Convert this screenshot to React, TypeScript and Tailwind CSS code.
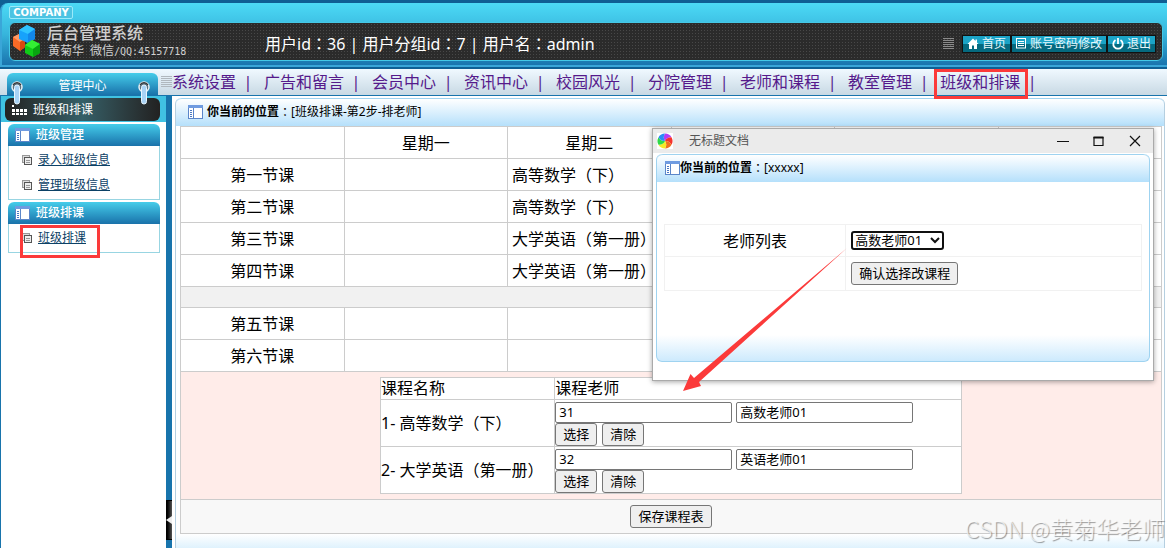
import { ReactNode } from 'react';

const FONT = "font-['Noto_Sans','Noto_Sans_CJK_SC',sans-serif]";

const NAV = ['系统设置', '广告和留言', '会员中心', '资讯中心', '校园风光', '分院管理', '老师和课程', '教室管理', '班级和排课'];

const MENUS = [
  { title: '班级管理', links: ['录入班级信息', '管理班级信息'] },
  { title: '班级排课', links: ['班级排课'] },
];

const MORNING = [
  { name: '第一节课', tuesday: '高等数学（下）' },
  { name: '第二节课', tuesday: '高等数学（下）' },
  { name: '第三节课', tuesday: '大学英语（第一册）' },
  { name: '第四节课', tuesday: '大学英语（第一册）' },
];

const AFTERNOON = [
  { name: '第五节课', tuesday: '' },
  { name: '第六节课', tuesday: '' },
];

const COURSES = [
  { id: 1, name: '高等数学（下）', teacherId: '31', teacher: '高数老师01' },
  { id: 2, name: '大学英语（第一册）', teacherId: '32', teacher: '英语老师01' },
];

const CELL = 'border border-[#ccc]';

function Stripes({ color }: { color: string }) {
  return (
    <svg width="11" height="12" viewBox="0 0 11 12" className="shrink-0" fill={color}>
      {[0, 2, 4, 6, 8, 10].map((y) => (
        <rect key={y} x="0" y={y} width="11" height="1" />
      ))}
    </svg>
  );
}

// the TC face centres the full-width colon in its box
function Colon() {
  return <span className="font-['Noto_Sans_CJK_TC',sans-serif]">：</span>;
}

function PanelIcon() {
  return (
    <svg width="15" height="14" viewBox="0 0 15 14" className="shrink-0">
      <rect x="0.5" y="1" width="14" height="12.5" fill="#fff" stroke="#5b86c9" />
      <rect x="0" y="0" width="15" height="3" fill="#6f9be0" />
      <path d="M5.5 3v10" stroke="#5b86c9" />
      <path d="M2 5.5h2M2 7.5h2M2 9.5h2M2 11.5h2" stroke="#4a78c2" />
    </svg>
  );
}

function PageIcon() {
  return (
    <svg width="10" height="10" viewBox="0 0 10 10" className="shrink-0" fill="none">
      <rect x="0.5" y="0.5" width="7" height="7" fill="#ddd" stroke="#999" />
      <rect x="2.5" y="2.5" width="7" height="7" fill="#eee" stroke="#555" />
      <path d="M4 5.5h4M4 7.5h4" stroke="#999" />
    </svg>
  );
}

function CubesLogo() {
  return (
    <svg width="27" height="33" viewBox="0 0 27 33" className="shrink-0">
      <path d="M0 12l6-3 6 5v8l-5 4-7-5z" fill="#fb6a26" />
      <path d="M0 12l6-3 6 5-5 3z" fill="#ff9a66" />
      <path d="M7 17l5-3v8l-5 4z" fill="#d9480f" />
      <path d="M6 5l8-5 8 4v10l-7 4-9-4z" fill="#17a2fb" />
      <path d="M6 5l8-5 8 4-7 5z" fill="#2fc4ff" />
      <path d="M15 9l7-5v10l-7 4z" fill="#1287ea" />
      <path d="M12 20l7-5 8 4v9l-7 4-8-4z" fill="#10cc18" />
      <path d="M12 20l7-5 8 4-7 5z" fill="#34ee34" />
      <path d="M20 24l7-5v9l-7 4z" fill="#08a510" />
    </svg>
  );
}

function Clip() {
  return (
    <svg width="12" height="24" viewBox="0 0 12 24">
      <circle cx="6" cy="6" r="5" fill="#5b6f7c" stroke="#e6eef3" strokeWidth="1.5" />
      <path d="M2 4a4.5 4.5 0 0 1 8 0" stroke="#333" strokeWidth="1.2" fill="none" />
      <rect x="3.5" y="4" width="5" height="19" rx="2.5" fill="#a9d3f5" stroke="#e8f6ff" />
    </svg>
  );
}

function HomeIcon() {
  return (
    <svg width="12" height="12" viewBox="0 0 12 12" fill="#fff">
      <path d="M6 0.5L0.5 6H2v5h3V7.5h2V11h3V6h1.5L10 4.4V1.5H8.5v1.4z" />
    </svg>
  );
}

function ListIcon() {
  return (
    <svg width="11" height="11" viewBox="0 0 11 11" fill="none" stroke="#fff">
      <rect x="0.5" y="0.5" width="9" height="9.5" />
      <path d="M2 3.5h6M2 5.5h6M2 7.5h6" />
    </svg>
  );
}

function PowerIcon() {
  return (
    <svg width="12" height="12" viewBox="0 0 12 12" fill="none" stroke="#fff" strokeWidth="1.8">
      <path d="M3.5 2a4.7 4.7 0 1 0 5 0M6 0v6" />
    </svg>
  );
}

function PinwheelIcon() {
  const colors = ['#b43cf5', '#f5322d', '#f0701e', '#f5ea28', '#2fd84a', '#2b8cf5'];
  return (
    <svg width="16" height="16" viewBox="0 0 16 16" className="bg-white">
      {colors.map((c, i) => (
        <path key={c} d="M8 8Q5.5 4.5 8 .5A7.5 7.5 0 0 1 14.5 4.25Q9.8 4.1 8 8z" fill={c} transform={`rotate(${i * 60} 8 8)`} />
      ))}
    </svg>
  );
}

function HeaderLink({ icon, children }: { icon: ReactNode; children: ReactNode }) {
  return (
    <a
      href="#"
      className="flex h-[18px] items-center gap-[3px] border border-[#111] bg-linear-to-b from-[#1ba3c6] from-50% to-[#056a80] to-50% px-1 text-xs text-[#e8f8fc]"
    >
      {icon}
      {children}
    </a>
  );
}

function FormButton({ children }: { children: ReactNode }) {
  return (
    <button type="button" className="h-[23px] rounded-[3px] border border-[#767676] bg-[#efefef] px-[7px] text-[13px] leading-[19px] text-black">
      {children}
    </button>
  );
}

function LocationBar({ children }: { children: ReactNode }) {
  return (
    <div className="flex h-7 items-center rounded-t-md border-t border-[#9fd3f0] bg-linear-to-b from-white to-[#b5e0fb] pb-px text-xs leading-4 text-black">
      {children}
    </div>
  );
}

function Header() {
  return (
    <header className="border-t-3 border-[#0f5f94] bg-[#0f5f94]">
      <div className="rounded-tl-lg border-b-2 border-l-2 border-[#3aa6d8] bg-linear-to-b from-[#4cdaf6] via-[#37b5dc] to-[#1a74ae] pt-[3px] pr-1 pb-1 pl-[7px]">
        <div className="flex">
          <span className="flex h-[13px] w-16 items-center justify-center rounded-xs border border-[#9aeafa] bg-[#4cc3e2] font-['DejaVu_Sans',sans-serif] text-[10px] font-bold text-white">
            COMPANY
          </span>
        </div>
        <div className="mt-[3px] flex h-[39px] items-center rounded-md border border-[#45c8e6] bg-[#2b2b2b] bg-[radial-gradient(#484848_1px,transparent_1px)] bg-size-[3px_3px] pr-1.5 pl-[3px]">
          <CubesLogo />
          <div className="ml-[7px] w-[218px] pt-0.5 font-['Liberation_Sans','Noto_Sans_CJK_SC',sans-serif] text-[#d0d0d0]">
            <div className="text-base leading-[18px] font-medium">后台管理系统</div>
            <div className="flex gap-1.5 pl-px text-xs leading-4">
              <span>黄菊华</span>
              <span>
                微信<span className="font-['DejaVu_Sans_Mono',monospace] text-[10px]">/QQ:45157718</span>
              </span>
            </div>
          </div>
          <div className="pt-1 text-base leading-5 text-white">
            用户id<Colon />36 | 用户分组id<Colon />7 | 用户名<Colon />admin
          </div>
          <div className="ml-auto flex items-center pt-1">
            <Stripes color="#8a8a8a" />
            <div className="ml-2 flex">
              <HeaderLink icon={<HomeIcon />}>首页</HeaderLink>
              <HeaderLink icon={<ListIcon />}>账号密码修改</HeaderLink>
              <HeaderLink icon={<PowerIcon />}>退出</HeaderLink>
            </div>
          </div>
        </div>
      </div>
      <div className="h-0.5" />
    </header>
  );
}

function NavBar() {
  return (
    <div className="flex h-[27px] items-stretch border-b border-[#1874ac] bg-linear-to-b from-[#f0f9ff] to-[#c8d9e4]">
      <div className="relative mt-1 ml-[7px] flex w-[151px] shrink-0 items-center justify-center rounded-t-md bg-linear-to-b from-[#46cdea] to-[#1a72aa] pt-1 text-xs text-white">
        管理中心
        <span className="absolute top-2 left-1 z-10"><Clip /></span>
        <span className="absolute top-2 right-2 z-10"><Clip /></span>
      </div>
      <nav className="ml-[3px] flex items-center text-base leading-6 whitespace-nowrap text-[#551a8b]">
        <Stripes color="#b0b8be" />
        {NAV.map((item) => (
          <span key={item} className="relative flex h-full items-center">
            <a href="#">{item}</a>
            <span className="w-7 pr-1 text-center">|</span>
            {item === '班级和排课' && <span className="absolute top-0 right-5 -bottom-1 -left-1.5 border-3 border-[#fb3a3a]" />}
          </span>
        ))}
      </nav>
    </div>
  );
}

function Sidebar() {
  return (
    <aside className="w-[166px] shrink-0 border-l border-[#1874ac] bg-white">
      <div className="bg-[#40c2e2] px-1 pt-0.5 pr-1.5 pb-px">
        <div className="flex h-[23px] items-center gap-[5px] rounded-md bg-linear-to-r from-[#222] via-[#356068] to-[#222] px-[7px] text-xs text-white">
          <svg width="16" height="12" viewBox="0 0 16 12" fill="#fff">
            <path d="M0 1h2v2H0zM0 5h3v3H0zM4 5h3v3H4zM8 5h3v3H8zM12 5h3v3h-3zM0 9h3v2H0zM4 9h3v2H4zM8 9h3v2H8zM12 9h3v2h-3z" />
          </svg>
          班级和排课
        </div>
      </div>
      <div className="flex flex-col gap-0.5 pt-0.5 pr-1.5 pl-[7px]">
        {MENUS.map((menu) => (
          <section key={menu.title}>
            <h2 className="flex h-[22px] items-center gap-1.5 rounded-t-md bg-linear-to-b from-[#46cdea] to-[#1a72aa] px-[7px] text-xs font-medium text-white">
              <PanelIcon />
              {menu.title}
            </h2>
            <ul className="border border-t-0 border-[#98d5e2] pt-px pb-0.5">
              {menu.links.map((link) => (
                <li key={link} className="relative flex h-[25px] items-center gap-1.5 pl-[13px] text-xs leading-4">
                  <PageIcon />
                  <a href="#" className="text-[#0c4166] underline">{link}</a>
                  {link === '班级排课' && <span className="absolute top-0 -bottom-2 left-[11px] w-20 border-3 border-[#fb3a3a]" />}
                </li>
              ))}
            </ul>
          </section>
        ))}
      </div>
    </aside>
  );
}

function LessonRow({ name, tuesday }: { name: string; tuesday: string }) {
  return (
    <tr className="h-8">
      <td className={`${CELL} text-center`}>{name}</td>
      <td className={CELL} />
      <td className={`${CELL} pl-1 whitespace-nowrap`}>{tuesday}</td>
      <td className={CELL} />
      <td className={CELL} />
      <td className={CELL} />
    </tr>
  );
}

function TeacherTable() {
  return (
    <table className="mx-auto w-3/5 border-collapse bg-white text-left">
      <thead>
        <tr className="h-[22px]">
          <th className={`${CELL} w-[30%] p-0 leading-[21px] font-normal`}>课程名称</th>
          <th id="teacher" className={`${CELL} p-0 leading-[21px] font-normal`}>课程老师</th>
        </tr>
      </thead>
      <tbody>
        {COURSES.map((c) => (
          <tr key={c.id}>
            <td id={`course-${c.id}`} className={`${CELL} p-0`}>{c.id}- {c.name}</td>
            <td className={`${CELL} p-0`}>
              <div className="flex gap-1 pt-0.5">
                {[c.teacherId, c.teacher].map((value) => (
                  <input
                    key={value}
                    type="text"
                    aria-labelledby={`course-${c.id} teacher`}
                    defaultValue={value}
                    className="h-[21px] w-[177px] rounded-xs border border-[#767676] bg-white px-[3px] pb-0.5 text-[13px]"
                  />
                ))}
              </div>
              <div className="flex gap-[5px]">
                <FormButton>选择</FormButton>
                <FormButton>清除</FormButton>
              </div>
            </td>
          </tr>
        ))}
      </tbody>
    </table>
  );
}

function Schedule() {
  return (
    <table className="w-full table-fixed border-collapse bg-white text-base leading-6 text-black">
      <thead>
        <tr className="h-8">
          <th className={CELL} />
          <th className={`${CELL} font-normal`}>星期一</th>
          <th className={`${CELL} font-normal`}>星期二</th>
          <th className={CELL} />
          <th className={CELL} />
          <th className={CELL} />
        </tr>
      </thead>
      <tbody>
        {MORNING.map((row) => <LessonRow key={row.name} {...row} />)}
        <tr className="h-[21px]">
          <td colSpan={6} className={`${CELL} bg-[#f1f1f1]`} />
        </tr>
        {AFTERNOON.map((row) => <LessonRow key={row.name} {...row} />)}
        <tr>
          <td colSpan={6} className={`${CELL} bg-[#ffece9] p-[5px]`}>
            <TeacherTable />
          </td>
        </tr>
        <tr>
          <td colSpan={6} className={`${CELL} bg-[#f8f8f8] p-[5px]`}>
            <div className="flex justify-center">
              <FormButton>保存课程表</FormButton>
            </div>
          </td>
        </tr>
      </tbody>
    </table>
  );
}

function Popup() {
  return (
    <div className="absolute top-32 left-[652px] w-[502px] border border-[#aaa] bg-white pb-[18px] shadow-[0_1px_5px_rgba(0,0,0,0.35)]">
      <div className="flex h-6 items-center bg-[#ebebeb] pr-3 pl-1 text-xs text-[#555]">
        <PinwheelIcon />
        <span className="ml-4">无标题文档</span>
        <svg width="84" height="12" viewBox="0 0 84 12" className="ml-auto" fill="none" stroke="#111" strokeWidth="1.2">
          <path d="M0 6.5h12M73 1l10 10M83 1l-10 10" />
          <path d="M37 2.5h9v8h-9z" />
          <path d="M36.5 2.5h10" strokeWidth="2" />
        </svg>
      </div>
      <div className="mx-[3px] mt-px rounded-md border border-t-0 border-[#9fd3f0] bg-linear-to-t from-[#cdeafd] to-white to-[26px]">
        <LocationBar>
          <span className="ml-2 flex"><PanelIcon /></span>
          <b>你当前的位置</b><Colon />[xxxxx]
        </LocationBar>
        <div className="px-[7px] pt-[42px] pb-[70px]">
          <table className="w-full border-collapse border border-[#f1f1f1] text-base text-black">
            <tbody>
              <tr className="h-8">
                <td className="w-[38%] border border-[#f1f1f1] text-center">
                  <label htmlFor="teacher-select">老师列表</label>
                </td>
                <td className="border border-[#f1f1f1] py-0 pl-[5px]">
                  <div className="relative w-[93px]">
                    <select id="teacher-select" className="block h-[19px] w-full appearance-none rounded-[3px] border-2 border-[#101010] bg-white px-0.5 text-[13px] leading-[15px]">
                      <option>高数老师01</option>
                    </select>
                    <svg width="10" height="7" viewBox="0 0 10 7" className="pointer-events-none absolute top-1.5 right-1" fill="none" stroke="#111" strokeWidth="2">
                      <path d="M1 1l4 4 4-4" />
                    </svg>
                  </div>
                </td>
              </tr>
              <tr className="h-[34px]">
                <td className="border border-[#f1f1f1]" />
                <td className="border border-[#f1f1f1] py-0 pl-[5px]">
                  <div className="flex"><FormButton>确认选择改课程</FormButton></div>
                </td>
              </tr>
            </tbody>
          </table>
        </div>
      </div>
    </div>
  );
}

export default function App() {
  return (
    <div className={`relative flex min-h-screen flex-col overflow-hidden bg-white ${FONT}`}>
      <Header />
      <NavBar />
      <div className="flex flex-1">
        <Sidebar />
        <div className="flex w-1.5 shrink-0 flex-col justify-end bg-[#1874ac] pb-2">
          <button type="button" className="flex h-10 items-center border-y border-black bg-linear-to-r from-black to-[#555]">
            <svg width="6" height="8" viewBox="0 0 6 8" fill="#eee"><path d="M6 0v8L0 4z" /></svg>
          </button>
        </div>
        <main className="flex min-w-0 flex-1 flex-col pt-0.5 pr-0.5 pl-[3px]">
          <div className="flex flex-1 flex-col rounded-t-md border-x border-[#b5cfe0]">
            <LocationBar>
              <span className="mr-1 ml-3 flex"><PanelIcon /></span>
              <b>你当前的位置</b><Colon />[班级排课-第2步-排老师]
            </LocationBar>
            <div className="pr-0.5 pl-1">
              <Schedule />
            </div>
            <div className="flex-1 bg-linear-to-b from-white to-[#dff2fd]" />
          </div>
        </main>
      </div>
      <Popup />
      <svg width="166" height="144" viewBox="0 0 166 144" className="pointer-events-none absolute top-[248px] left-[682px]" fill="#fb3a3a">
        <path d="M165 0L12 130 8.5 126 1 143 19 138 17 134z" />
      </svg>
      <div className="pointer-events-none absolute right-0.5 bottom-1 font-['Noto_Sans_CJK_SC',sans-serif] text-[23px] leading-8 font-light text-white/70 [text-shadow:1px_1px_1px_rgba(0,0,0,0.4)]">
        CSDN @黄菊华老师
      </div>
    </div>
  );
}
